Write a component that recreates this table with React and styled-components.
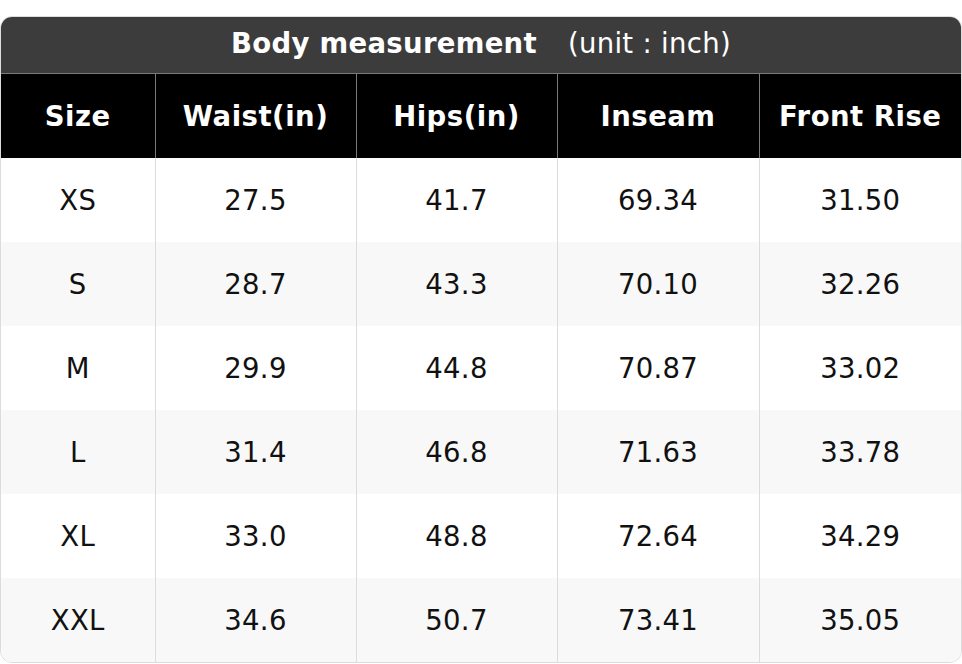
import React from "react";
import styled, { createGlobalStyle } from "styled-components";

const GlobalStyle = createGlobalStyle`
  html, body {
    margin: 0;
    padding: 0;
    background: #fff;
  }
  body {
    font-family: "DejaVu Sans", "Liberation Sans", sans-serif;
  }
`;

const Page = styled.div`
  padding-top: 16px;
  width: 962px;
`;

const Card = styled.div`
  border: 1px solid #dcdcdc;
  border-radius: 12px;
  overflow: hidden;
  width: 960px;
`;

const Title = styled.div`
  height: 57px;
  background: #3c3c3c;
  color: #fff;
  display: flex;
  align-items: center;
  justify-content: center;
  font-size: 27.5px;
  line-height: 1;
  padding-bottom: 3px;
  box-sizing: border-box;
  border-bottom: 1px solid #7a7a7a;
`;

const TitleMain = styled.span`
  font-weight: bold;
  letter-spacing: 0.3px;
`;

const Unit = styled.span`
  margin-left: 31px;
  letter-spacing: 0.3px;
`;

const Table = styled.table`
  width: 100%;
  border-collapse: collapse;
  table-layout: fixed;
`;

const HeadCell = styled.th`
  height: 84px;
  background: #000;
  color: #fff;
  font-size: 27.5px;
  font-weight: bold;
  letter-spacing: 0.5px;
  text-align: center;
  padding: 0;
  border-left: 1px solid #7a7a7a;
  &:first-child {
    border-left: none;
  }
`;

const Row = styled.tr`
  background: ${(p) => (p.$alt ? "#f8f8f8" : "#fff")};
`;

const Cell = styled.td`
  height: 84px;
  font-size: 27.5px;
  color: #111;
  text-align: center;
  padding: 0;
  letter-spacing: 0.3px;
  border-left: 1px solid #dcdcdc;
  &:first-child {
    border-left: none;
  }
`;

const columns = ["Size", "Waist(in)", "Hips(in)", "Inseam", "Front Rise"];
const widths = [154, 201, 201, 202, 202];

const rows = [
  ["XS", "27.5", "41.7", "69.34", "31.50"],
  ["S", "28.7", "43.3", "70.10", "32.26"],
  ["M", "29.9", "44.8", "70.87", "33.02"],
  ["L", "31.4", "46.8", "71.63", "33.78"],
  ["XL", "33.0", "48.8", "72.64", "34.29"],
  ["XXL", "34.6", "50.7", "73.41", "35.05"],
];

export default function App() {
  return (
    <Page>
      <GlobalStyle />
      <Card>
        <Title>
          <TitleMain>Body measurement</TitleMain>
          <Unit>(unit : inch)</Unit>
        </Title>
        <Table>
          <colgroup>
            {widths.map((w, i) => (
              <col key={i} style={{ width: w }} />
            ))}
          </colgroup>
          <thead>
            <tr>
              {columns.map((c) => (
                <HeadCell key={c}>{c}</HeadCell>
              ))}
            </tr>
          </thead>
          <tbody>
            {rows.map((r, i) => (
              <Row key={r[0]} $alt={i % 2 === 1}>
                {r.map((v, j) => (
                  <Cell key={j}>{v}</Cell>
                ))}
              </Row>
            ))}
          </tbody>
        </Table>
      </Card>
    </Page>
  );
}
